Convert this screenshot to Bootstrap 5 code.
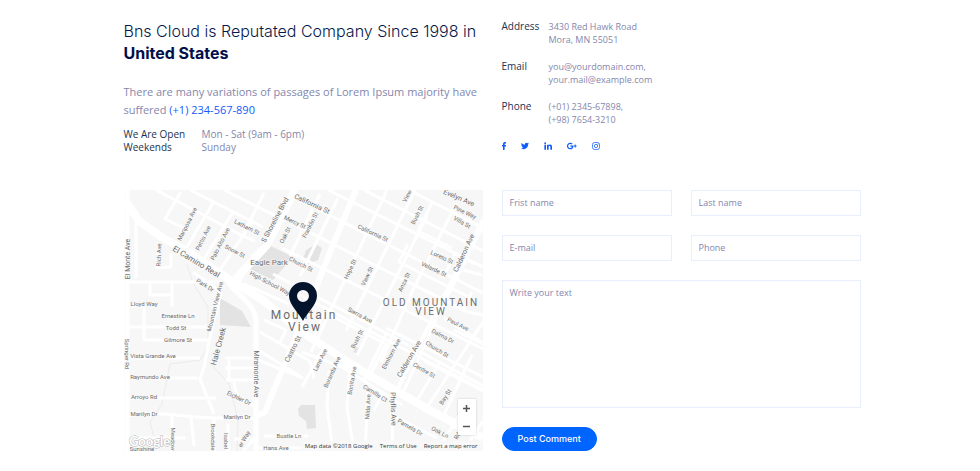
<!DOCTYPE html>
<html lang="en">
<head>
<meta charset="utf-8">
<meta name="viewport" content="width=device-width, initial-scale=1">
<title>Bns Cloud - Contact</title>
<link href="https://cdn.jsdelivr.net/npm/bootstrap@5.3.0/dist/css/bootstrap.min.css" rel="stylesheet">
<style>
  body { font-family: "Open Sans", sans-serif; font-size: 9px; line-height: 13px; color: #8487ad; background: #fff; }
  .contact-page { max-width: 761px; padding: 20px 10px 20px 14px; }
  .contact-page .row { --bs-gutter-x: 19px; margin-left: 0; margin-right: -19px; }
  .contact-page .row > * { padding-left: 0; padding-right: 19px; }
  .top-row { margin-bottom: 36px; }
  .headline { font-family: Inter, sans-serif; font-size: 16px; line-height: 22px; font-weight: 300; color: #06194a; margin-bottom: 19px; }
  .headline strong { font-weight: 700; color: #030f4c; }
  .intro { font-size: 11px; line-height: 18px; margin-bottom: 9px; }
  a { color: #0f5cff; text-decoration: none; }
  dt { font-weight: 400; color: #1c3150; }
  dl, dd { margin: 0; }
  .hours { display: grid; grid-template-columns: 78px 1fr; font-size: 10px; }
  .details { display: grid; grid-template-columns: 47px 1fr; row-gap: 14px; }
  .details dt { font-size: 10px; }
  .social { margin-top: 16px; gap: 15px; }
  .social svg { display: block; height: 8px; fill: #0f5cff; }
  .map-box { height: 261px; background: #f7f7f7; }
  .map-box > svg { display: block; width: 100%; height: 100%; }
  .map-box text { font-family: Roboto, sans-serif; font-size: 6px; fill: #6c6c6c; text-anchor: middle; stroke: #fafafa; stroke-width: 1px; paint-order: stroke; }
  .map-box .street-big { font-size: 7px; }
  .map-box .park { font-size: 8px; }
  .map-box .district { font-size: 10px; letter-spacing: 2px; }
  .map-box .town { font-size: 12px; letter-spacing: 2px; }
  .map-box .logo-text { font-family: Lato, sans-serif; font-size: 13px; font-weight: 700; fill: #fff; stroke: #b5b5b5; stroke-width: 1px; text-anchor: start; }
  .map-zoom { right: 7px; bottom: 16px; width: 18px; box-shadow: 0 0 2px #0003; }
  .map-zoom button { border: 0; background: #fff; height: 18px; padding: 0; display: grid; place-items: center; }
  .map-legal { right: 0; bottom: 0; gap: 7px; padding: 0 5px 0 4px; background: #f8f8f8cc; font-size: 6px; line-height: 10px; }
  .map-legal, .map-legal a { color: #333; }
  .contact-form { --bs-gutter-y: 19px; }
  .contact-form .form-control { border: 1px solid #e8eefe; border-radius: 0; font-size: 9px; line-height: 13px; padding: 5px 7px 6px; min-height: 26px; color: #555a85; }
  .contact-form .form-control::placeholder { color: #8487ad; opacity: 1; }
  .contact-form textarea.form-control { height: 128px; resize: none; }
  .send-btn { background: #0064ff; color: #fff; font-family: Inter, sans-serif; font-size: 9px; font-weight: 500; line-height: 12px; padding: 5px 15px; border: 1px solid #0064ff; border-radius: 12px; }
</style>
<script src="https://cdn.jsdelivr.net/npm/bootstrap@5.3.0/dist/js/bootstrap.bundle.min.js"></script>
</head>
<body>
<main class="contact-page container-fluid mx-auto">
  <div class="row top-row">
    <section class="col-6">
      <h1 class="headline">Bns Cloud is Reputated Company Since 1998 in<br><strong>United States</strong></h1>
      <p class="intro">There are many variations of passages of Lorem Ipsum majority have suffered <a href="tel:+1234567890">(+1) 234-567-890</a></p>
      <dl class="hours">
        <dt>We Are Open</dt><dd>Mon - Sat (9am - 6pm)</dd>
        <dt>Weekends</dt><dd>Sunday</dd>
      </dl>
    </section>
    <section class="col-6">
      <dl class="details">
        <dt>Address</dt><dd>3430 Red Hawk Road<br>Mora, MN 55051</dd>
        <dt>Email</dt><dd>you@yourdomain.com,<br>your.mail@example.com</dd>
        <dt>Phone</dt><dd>(+01) 2345-67898,<br>(+98) 7654-3210</dd>
      </dl>
      <nav class="social d-flex" aria-label="Social links">
        <a href="#" aria-label="Facebook"><svg width="4" viewBox="0 0 4 8"><path d="M1 8V4.500H0V3h1V2.100C1 .7 1.800 0 3 0h1v1.400h-.7c-.5 0-.7.3-.7.8V3H4l-.2 1.500H2.600V8z"/></svg></a>
        <a href="#" aria-label="Twitter"><svg width="8" viewBox="0 0 24 20"><path d="M24 2.400a10 10 0 0 1-2.800.8A5 5 0 0 0 23.300.500a10 10 0 0 1-3.100 1.200A4.900 4.900 0 0 0 11.800 6.200 14 14 0 0 1 1.700 1a4.900 4.900 0 0 0 1.500 6.600A4.900 4.900 0 0 1 1 7a4.900 4.900 0 0 0 3.900 4.900 5 5 0 0 1-2.200.1 4.900 4.900 0 0 0 4.600 3.400A9.900 9.900 0 0 1 0 17.400 14 14 0 0 0 21.500 4.900 10 10 0 0 0 24 2.400z"/></svg></a>
        <a href="#" aria-label="LinkedIn"><svg width="8" viewBox="0 0 24 24"><path d="M1 8h5v15H1zM3.500 1a2.700 2.700 0 1 1 0 5.400 2.700 2.700 0 0 1 0-5.400zM9 8h4.700v2.100c.8-1.400 2.400-2.500 4.700-2.500 4.500 0 5.600 2.900 5.600 6.900V23h-5v-7.600c0-1.900-.3-3.600-2.400-3.600s-2.700 1.500-2.700 3.500V23H9z"/></svg></a>
        <a href="#" aria-label="Google Plus"><svg width="10" viewBox="0 0 24 18"><path d="M8 7.500h7.200c1 5-2 9.500-7.200 9.500a8 8 0 1 1 5.400-13.900L11.200 5.300A5 5 0 1 0 8 14c2.300 0 3.700-1.300 4-3.500H8zM18.500 5.500h2.200v2.300H23V10h-2.300v2.300h-2.200V10h-2.300V7.800h2.300z"/></svg></a>
        <a href="#" aria-label="Instagram"><svg width="8" viewBox="0 0 24 24"><g fill="none" stroke="#0f5cff" stroke-width="2.200"><rect x="1.500" y="1.500" width="21" height="21" rx="6"/><circle cx="12" cy="12" r="5"/></g><circle cx="18" cy="6" r="1.500"/></svg></a>
      </nav>
    </section>
  </div>

  <div class="row">
    <section class="col-6">
      <div class="map-box position-relative overflow-hidden">
        <svg viewBox="0 0 359 261" preserveAspectRatio="xMidYMid slice" role="img" aria-label="Map of Mountain View">
          <rect width="359" height="261" fill="#f7f7f7"/>
          <g fill="#e3e3e3">
            <path d="M139 52l30 15-20 23-25-12zM96 108l22 13 9 16-31-2zM182 60l10-6 6 4-4 12-10 4-5-5zM174 219l3-4 14 0 1 23-9 1-1-8-7-5zM232 157l4 2-2 5-5-2z"/>
          </g>
          <path d="M63 75l6 18 15 24 0 40-8 13-30 4-8 40-12 18 4 15M85 172l20 22 9 35-1 32" fill="none" stroke="#ebebeb"/>
          <g fill="none" stroke="#fff" stroke-width="3" stroke-linejoin="round">
            <path d="M32 0l85 45 14 6M66 0l73 37M100 0l62 31M57 2L41 29l25 12M89 13L60 62M109 22L77 74M128 32L94 83M140 3l-20 40"/>
            <path d="M164 4l195 99M169 34l175 88 15 3M158 58l201 101M120 94l45 20M149 84l100 52 110 60M204 0l155 77M240 0l119 61M285 0l74 38M130 64l-20 38"/>
            <path d="M214 8l-38 78M263 0l-61 130-15 32M291 0l-69 141M303 26l-70 139M332 14l-45 90-30 68M359 36l-42 83-40 88M196 4l-30 62"/>
            <path d="M284 54l-9 18 68 34M290 95l49 25 9-18M308 13l-14 28 34 17M319 88l12-24 20 10M332 78l26 7"/>
            <path d="M176 105l100 52 83 43M190 147l10-25 62 32-18 36M262 138l97 49M240 190l22-46M270 205l39-78M300 171l59 30M320 128l39 25M300 222l59-90M292 212l24-40M320 225l28-60M330 140l29 14"/>
            <path d="M201 155l-23 42M205 180l-2 36 6 45M226 177l-3 40 7 44M244 202l-3 59M270 197l-2 64M178 162l40 15 60 38M285 210l54 29M268 225l45 23M258 204l-8 17M214 173l14 7M340 218l-27 43M330 237l29 10M359 231l-20 30"/>
            <path d="M136 142l50 29 4 18M134 160l42 26M140 130l22 10-6 12"/>
            <path d="M12 26v62M2 92h95M35 60l-2 18 14-1V63M48 92v25M26 92v13h24M2 116h20M20 116v34M2 137h83M20 150h65M2 168h74M2 188h72M2 208h90M2 226c45-7 60 5 129 2M48 226v35M90 228v33M67 228l3 28M104 233v28M10 248h52M110 249h22M132 247l-13 14M140 246h44M132 258h55"/>
            <path d="M69 82l28 20-11 45-6 30-4 12 14 35M101 168h31M101 178h31M102 190h30M105 168v22M110 192c1 16 10 22 22 24M134 170l45 18"/>
          </g>
          <g fill="none" stroke="#fff" stroke-linejoin="round">
            <path d="M1 10l15 22 23 16 27 15 40 27 34 21 36 30 67 43 66 38 50 26" stroke-width="8"/>
            <path d="M171 0l-28 55-35 38" stroke-width="8"/>
            <path d="M232 0l-23 55-18 45-22 55-20 47-8 20-9 4" stroke-width="6"/>
            <path d="M359 30l-48 94-39 78" stroke-width="4"/>
            <path d="M3 0v261M104 91c5 12 26 20 28 39v131" stroke-width="5"/>
          </g>
          <text transform="translate(65 35) rotate(-63)">Mariposa Ave</text>
          <text transform="translate(81 49) rotate(-63)">Pettis Ave</text>
          <text transform="translate(98 55) rotate(-63)">Palo Alto Ave</text>
          <text transform="translate(122 39) rotate(27)">Latham St</text>
          <text transform="translate(110 63) rotate(27)">Snow St</text>
          <text transform="translate(37 65) rotate(-88)">Rich Ave</text>
          <text transform="translate(6 69) rotate(-90)" class="street-big">El Monte Ave</text>
          <text transform="translate(71 74) rotate(31)" class="park">El Camino Real</text>
          <text transform="translate(80 97) rotate(32)">Park Dr</text>
          <text transform="translate(153 31) rotate(-62)" class="street-big">S Shoreline Blvd</text>
          <text transform="translate(170 34) rotate(25)">Mercy St</text>
          <text transform="translate(163 46) rotate(-63)">Oak St</text>
          <text transform="translate(188 36) rotate(-63)">Franklin St</text>
          <text transform="translate(187 16) rotate(25)" class="street-big">California St</text>
          <text transform="translate(248 45) rotate(25)">California St</text>
          <text transform="translate(176 76) rotate(27)">Church St</text>
          <text transform="translate(145 95) rotate(28)">High School Way</text>
          <text x="145" y="75" class="park">Eagle Park</text>
          <text transform="translate(93 117) rotate(-76)">Mountain View Ave</text>
          <text x="20" y="116">Lloyd Way</text>
          <text x="54" y="128">Ernestine Ln</text>
          <text x="52" y="140">Todd St</text>
          <text x="54" y="152">Gilmore St</text>
          <text x="29" y="168">Vista Grande Ave</text>
          <text x="26" y="189">Raymundo Ave</text>
          <text x="20" y="209">Arroyo Rd</text>
          <text x="20" y="226">Marilyn Dr</text>
          <text x="113" y="229">Marilyn Dr</text>
          <text transform="translate(1 164) rotate(90)">Springer Rd</text>
          <text transform="translate(97 157) rotate(-75)" class="park">Hale Creek</text>
          <text transform="translate(130 184) rotate(90)" class="street-big">Miramonte Ave</text>
          <text transform="translate(114 210) rotate(25)">Eichler Dr</text>
          <text transform="translate(171 160) rotate(-63)" class="street-big">Castro St</text>
          <text transform="translate(47 249) rotate(90)">Meadow</text>
          <text transform="translate(87 247) rotate(90)">Brookdale</text>
          <text transform="translate(100 251) rotate(90)">Isabel</text>
          <text transform="translate(122 250) rotate(-60)">er Way</text>
          <text x="165" y="248">Bustle Ln</text>
          <text x="152" y="260">Hans Ave</text>
          <text x="18" y="261">Sunshine</text>
          <text transform="translate(285 7) rotate(-63)">View</text>
          <text transform="translate(295 26) rotate(-63)">Bush St</text>
          <text transform="translate(334 10) rotate(23)" class="street-big">Evelyn Ave</text>
          <text transform="translate(340 24) rotate(25)">Pine Way</text>
          <text transform="translate(337 34) rotate(30)">Villa St</text>
          <text transform="translate(317 69) rotate(25)">Loreto St</text>
          <text transform="translate(309 81) rotate(25)">Velarde St</text>
          <text transform="translate(342 64) rotate(-65)" class="street-big">Calderon Ave</text>
          <text transform="translate(228 80) rotate(-65)">Hope St</text>
          <text transform="translate(245 87) rotate(-65)">View St</text>
          <text transform="translate(282 93) rotate(-65)">Anza St</text>
          <text x="307" y="116" class="district">OLD MOUNTAIN</text>
          <text x="307" y="125" class="district">VIEW</text>
          <text transform="translate(235 127) rotate(28)">Sierra Ave</text>
          <text x="180" y="129" class="town">Mountain</text>
          <text x="181" y="141" class="town">View</text>
          <text transform="translate(235 150) rotate(-63)">Bush St</text>
          <text transform="translate(198 171) rotate(-63)">Lane Ave</text>
          <text transform="translate(210 183) rotate(-66)">Boranda Ave</text>
          <text transform="translate(230 191) rotate(-80)">Bonita Ave</text>
          <text transform="translate(269 165) rotate(-62)">Elmhorn Ave</text>
          <text transform="translate(287 170) rotate(-60)" class="street-big">Calderon Ave</text>
          <text transform="translate(333 136) rotate(27)">Paul Ave</text>
          <text transform="translate(318 148) rotate(28)">Dalma Dr</text>
          <text transform="translate(312 161) rotate(32)">Church St</text>
          <text transform="translate(299 182) rotate(30)">Centre St</text>
          <text transform="translate(250 205) rotate(32)">Camille Ct</text>
          <text transform="translate(246 217) rotate(-87)">Nilda Ave</text>
          <text transform="translate(267 219) rotate(88)" class="street-big">Phyllis Ave</text>
          <text transform="translate(323 208) rotate(-58)">Bay St</text>
          <text transform="translate(285 239) rotate(30)">Pamela Dr</text>
          <text transform="translate(315 244) rotate(28)">Oak Ln</text>
          <text transform="translate(335 247) rotate(-60)">Rd</text>
          <path d="M179 131c-3-7-14-16-14-25a14 14 0 1 1 28 0c0 9-11 18-14 25zm0-31a6 6 0 1 0 0 12 6 6 0 0 0 0-12z" fill="#03142c"/>
          <text x="5" y="256" class="logo-text">Google</text>
        </svg>
        <div class="map-zoom position-absolute d-grid">
          <button type="button" aria-label="Zoom in"><svg width="7" height="7" viewBox="0 0 7 7"><path d="M0 3.500h7M3.500 0v7" stroke="#555" stroke-width="1.500"/></svg></button>
          <button type="button" aria-label="Zoom out"><svg width="7" height="7" viewBox="0 0 7 7"><path d="M0 3.500h7" stroke="#555" stroke-width="1.500"/></svg></button>
        </div>
        <div class="map-legal position-absolute d-flex text-nowrap">
          <span>Map data ©2018 Google</span><a href="#">Terms of Use</a><a href="#">Report a map error</a>
        </div>
      </div>
    </section>
    <section class="col-6">
      <form>
        <div class="row contact-form">
          <div class="col-6"><input class="form-control" type="text" placeholder="Frist name" aria-label="First name"></div>
          <div class="col-6"><input class="form-control" type="text" placeholder="Last name" aria-label="Last name"></div>
          <div class="col-6"><input class="form-control" type="email" placeholder="E-mail" aria-label="E-mail"></div>
          <div class="col-6"><input class="form-control" type="tel" placeholder="Phone" aria-label="Phone"></div>
          <div class="col-12"><textarea class="form-control" placeholder="Write your text" aria-label="Write your text"></textarea></div>
          <div class="col-12"><button class="send-btn" type="submit">Post Comment</button></div>
        </div>
      </form>
    </section>
  </div>
</main>
</body>
</html>
